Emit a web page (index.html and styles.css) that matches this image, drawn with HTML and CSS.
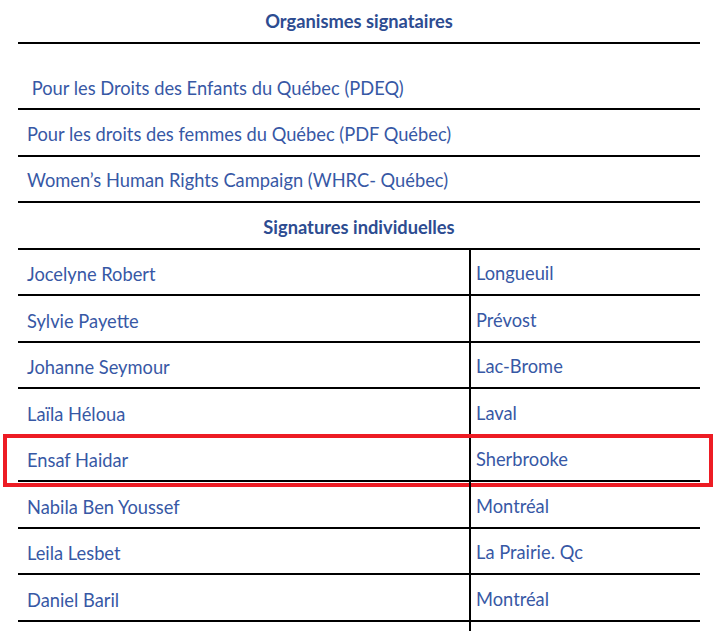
FILE: index.html
```html
<!DOCTYPE html>
<html lang="fr">
<head>
<meta charset="utf-8">
<title>Signataires</title>
<link rel="stylesheet" href="styles.css">
</head>
<body>
<div class="sheet">
  <div class="head head-top">Organismes signataires</div>
  <div class="row org org-first"><span class="cell">&nbsp;Pour les Droits des Enfants du Québec (PDEQ)</span></div>
  <div class="row org"><span class="cell">Pour les droits des femmes du Québec (PDF Québec)</span></div>
  <div class="row org"><span class="cell">Women’s Human Rights Campaign (WHRC- Québec)</span></div>
  <div class="head">Signatures individuelles</div>
  <div class="row pair"><span class="cell name">Jocelyne Robert</span><span class="cell city">Longueuil</span></div>
  <div class="row pair"><span class="cell name">Sylvie Payette</span><span class="cell city">Prévost</span></div>
  <div class="row pair"><span class="cell name">Johanne Seymour</span><span class="cell city">Lac-Brome</span></div>
  <div class="row pair"><span class="cell name">Laïla Héloua</span><span class="cell city">Laval</span></div>
  <div class="row pair highlighted"><span class="cell name">Ensaf Haidar</span><span class="cell city">Sherbrooke</span><span class="mark"></span></div>
  <div class="row pair"><span class="cell name">Nabila Ben Youssef</span><span class="cell city">Montréal</span></div>
  <div class="row pair"><span class="cell name">Leila Lesbet</span><span class="cell city">La Prairie. Qc</span></div>
  <div class="row pair"><span class="cell name">Daniel Baril</span><span class="cell city">Montréal</span></div>
  <div class="row pair tail"><span class="cell name"></span><span class="cell city"></span></div>
</div>
</body>
</html>
```

FILE: styles.css
```css
html {
  overflow: hidden;
}
body {
  margin: 0;
  background: #ffffff;
  font-family: Lato, "Open Sans", "Liberation Sans", sans-serif;
  font-size: 18.3px;
  color: #3758a5;
}
.sheet {
  margin-left: 18px;
  width: 682px;
}
.head {
  border-bottom: 2px solid #000;
  display: flex;
  align-items: center;
  justify-content: center;
  padding-top: 3px;
  box-sizing: border-box;
  height: 46.5px;
  font-weight: 700;
  color: #2d4c91;
}
.head-top {
  height: 44px;
  padding-top: 0;
}
.row {
  display: flex;
  height: 46.5px;
  box-sizing: border-box;
  border-bottom: 2px solid #000;
  position: relative;
}
.cell {
  display: flex;
  align-items: center;
  padding-top: 3px;
  white-space: pre;
}
.org .cell {
  padding-left: 9px;
}
.org-first {
  height: 66px;
}
.org-first .cell {
  padding-top: 23px;
  padding-left: 9px;
}
.name {
  width: 453px;
  padding-left: 9px;
  box-sizing: border-box;
  border-right: 2px solid #000;
}
.city {
  padding-left: 5px;
}
.pair .cell {
  height: 100%;
  box-sizing: border-box;
}
.pair .name {
  height: calc(100% + 2px);
  margin-bottom: -2px;
}
.tail {
  height: 10px;
  border-bottom: none;
}
.tail .name {
  height: 10px;
  margin-bottom: 0;
}
.mark {
  position: absolute;
  left: -15px;
  top: -1.5px;
  width: 710px;
  height: 53px;
  box-sizing: border-box;
  border: 4.5px solid #ed1c24;
  pointer-events: none;
}
```
